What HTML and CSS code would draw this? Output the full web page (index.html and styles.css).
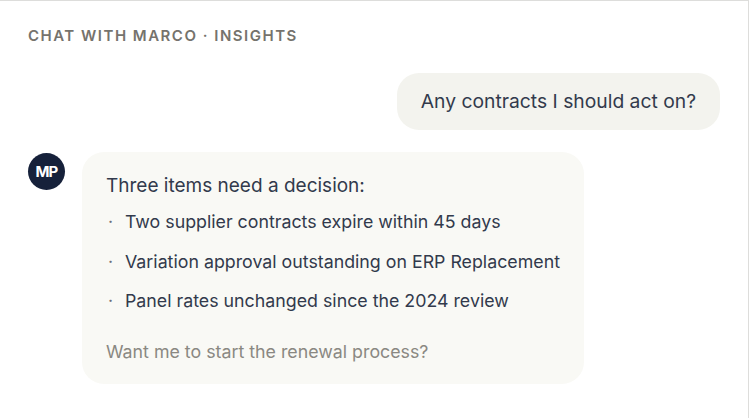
FILE: index.html
```html
<!DOCTYPE html>
<html>
    <head>
        <title>Chat with Marco</title>
        <link rel="stylesheet" href="styles.css">
    </head>
    <body>
        <div class="frame">
            <div class="chat-title">Chat with Marco · Insights</div>

            <!--user question-->
            <div class="row-user">
                <div class="bubble-user">Any contracts I should act on?</div>
            </div>

            <!--assistant answer-->
            <div class="row-bot">
                <div class="avatar">MP</div>
                <div class="bubble-bot">
                    <p class="lead">Three items need a decision:</p>
                    <ul class="items">
                        <li><span class="dot">·</span>Two supplier contracts expire within 45 days</li>
                        <li><span class="dot">·</span>Variation approval outstanding on ERP Replacement</li>
                        <li><span class="dot">·</span>Panel rates unchanged since the 2024 review</li>
                    </ul>
                    <p class="follow">Want me to start the renewal process?</p>
                </div>
            </div>
        </div>
    </body>
</html>
```

FILE: styles.css
```css
body{
    margin: 0;
    background-color: white;
    font-family: Inter, "Noto Sans", sans-serif;
    color: #323a4c;
}

.frame{
    height: 100vh;
    box-sizing: border-box;
    border-top: 1px solid #dddddb;
    border-right: 1px solid #dddddb;
    padding: 25px 28px;
}

.chat-title{
    font-size: 15px;
    font-weight: 600;
    line-height: 20px;
    letter-spacing: 0.1em;
    text-transform: uppercase;
    color: #75736d;
}

.row-user{
    display: flex;
    justify-content: flex-end;
    margin-top: 27px;
}

.bubble-user{
    background-color: #f3f3ee;
    border-radius: 22px;
    padding: 16px 24px;
    font-size: 19.3px;
    line-height: 25px;
}

.row-bot{
    display: flex;
    align-items: flex-start;
    gap: 17px;
    margin-top: 22px;
}

.avatar{
    width: 37px;
    height: 37px;
    flex: none;
    margin-top: 1px;
    border-radius: 50%;
    background-color: #16213a;
    color: white;
    font-size: 15px;
    font-weight: 700;
    letter-spacing: -0.05em;
    display: flex;
    align-items: center;
    justify-content: center;
}

.bubble-bot{
    background-color: #f9f9f5;
    border-radius: 22px;
    padding: 20px 24px 18px;
    font-size: 17.8px;
    line-height: 28px;
}

.lead{
    margin: 0;
    font-size: 19px;
}

.items{
    list-style: none;
    margin: 8px 0 0;
    padding: 0;
    display: flex;
    flex-direction: column;
    gap: 11.5px;
}

.items li{
    display: flex;
    white-space: nowrap;
}

.dot{
    width: 19px;
    flex: none;
    padding-left: 2px;
    box-sizing: border-box;
    color: #6d6f78;
}

.follow{
    margin: 23px 0 0;
    color: #8a8882;
}
```
